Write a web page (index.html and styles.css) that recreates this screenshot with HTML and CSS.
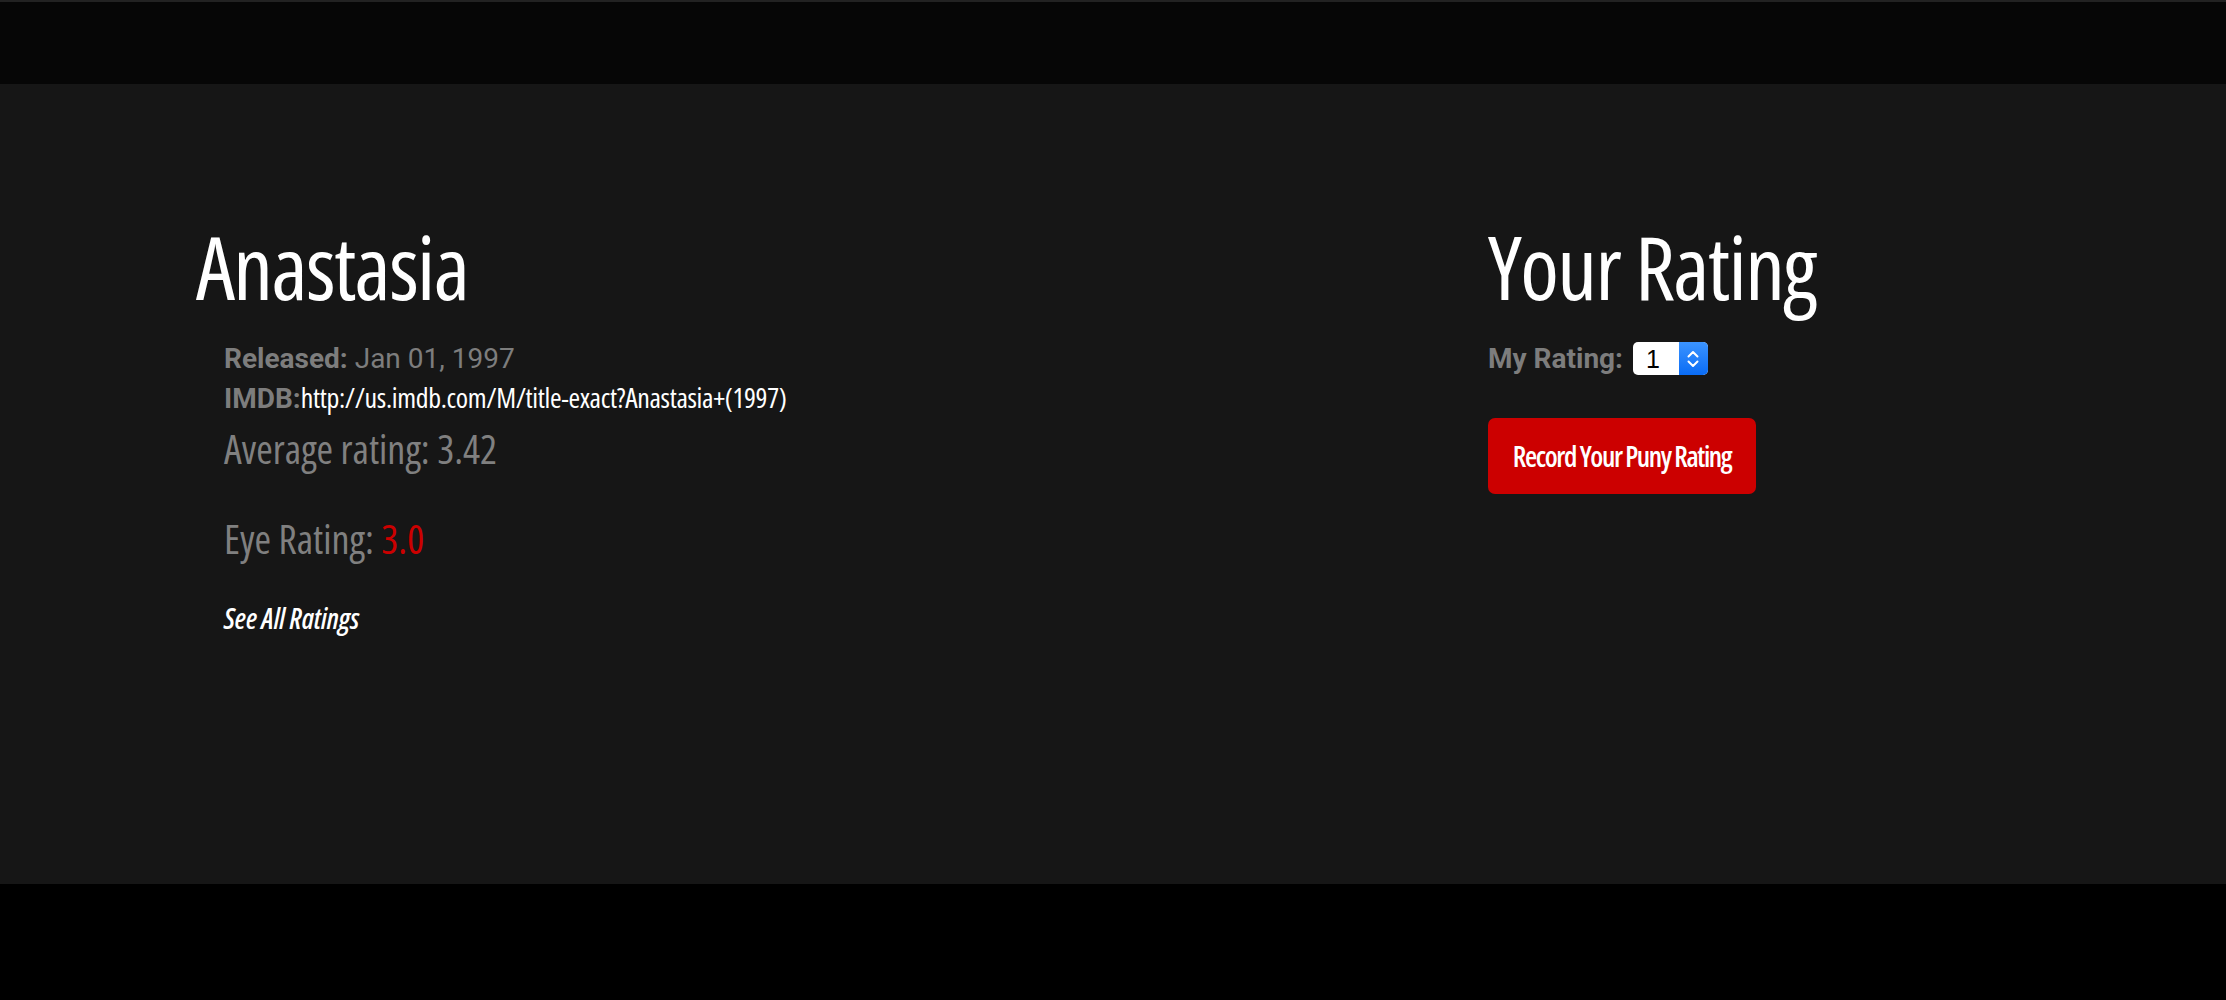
FILE: index.html
```html
<!DOCTYPE html>
<html lang="en">
<head>
<meta charset="utf-8">
<title>Anastasia</title>
<link rel="stylesheet" href="styles.css">
</head>
<body>
<header class="topbar"></header>
<main class="movie">
  <section class="info">
    <h1 class="title">Anastasia</h1>
    <div class="details">
      <div class="meta"><span class="label">Released:</span> Jan 01, 1997</div>
      <div class="meta"><span class="label">IMDB:</span><a class="imdb" href="#">http://us.imdb.com/M/title-exact?Anastasia+(1997)</a></div>
      <p class="avg">Average rating: 3.42</p>
      <p class="eye">Eye Rating: <span class="eye-val">3.0</span></p>
      <a class="all" href="#">See All Ratings</a>
    </div>
  </section>
  <section class="yours">
    <h1 class="title">Your Rating</h1>
    <div class="my-row">
      <span class="label">My Rating:</span>
      <div class="picker">
        <select class="picker-select">
          <option>1</option><option>2</option><option>3</option><option>4</option><option>5</option>
        </select>
        <span class="picker-arrows"><svg width="14" height="22" viewBox="0 0 14 22"><path d="M2.5 8.5 L7 4 L11.5 8.5" fill="none" stroke="#fff" stroke-width="2" stroke-linecap="round" stroke-linejoin="round"/><path d="M2.5 13.5 L7 18 L11.5 13.5" fill="none" stroke="#fff" stroke-width="2" stroke-linecap="round" stroke-linejoin="round"/></svg></span>
      </div>
    </div>
    <button class="record">Record Your Puny Rating</button>
  </section>
</main>
</body>
</html>
```
FILE: styles.css
```css
html, body {
  margin: 0;
  padding: 0;
}
body {
  background: #000;
  font-family: "Open Sans", "Roboto Condensed", sans-serif;
  font-stretch: 75%;
  color: #fff;
}
.topbar {
  height: 82px;
  background: #060606;
  border-top: 2px solid #222;
}
.movie {
  background: #161616;
  height: 800px;
  box-sizing: border-box;
  padding: 138px 196px 0;
  display: grid;
  grid-template-columns: 1292px 1fr;
}
.title {
  margin: 0;
  font-weight: normal;
  font-size: 88px;
  line-height: 88px;
  letter-spacing: -1.6px;
  color: #fff;
}
.details {
  padding-left: 28px;
  margin-top: 29px;
}
.meta {
  font-family: Roboto, "Liberation Sans", sans-serif;
  font-stretch: normal;
  font-size: 28px;
  line-height: 39px;
  height: 39px;
  color: #7d7d7d;
}
.label {
  font-family: Roboto, "Liberation Sans", sans-serif;
  font-stretch: normal;
  font-weight: bold;
  font-size: 28px;
  color: #7d7d7d;
}
.imdb {
  font-family: "Open Sans", "Roboto Condensed", sans-serif;
  font-stretch: 75%;
  font-size: 28px;
  letter-spacing: -0.35px;
  color: #fff;
  text-decoration: none;
}
.avg, .eye {
  margin: 0;
  font-size: 40px;
  line-height: 47px;
  letter-spacing: 0;
  color: #808080;
}
.avg {
  margin-top: 8px;
}
.eye {
  margin-top: 43px;
}
.eye-val {
  color: #cc0000;
}
.all {
  display: block;
  margin-top: 40px;
  font-size: 28px;
  line-height: 32px;
  font-style: italic;
  font-weight: 600;
  letter-spacing: -0.1px;
  color: #fff;
  text-decoration: none;
}
.my-row {
  margin-top: 29px;
  height: 39px;
  display: flex;
  align-items: center;
  gap: 10px;
}
.picker {
  position: relative;
  width: 75px;
  height: 33px;
}
.picker-select {
  appearance: none;
  -webkit-appearance: none;
  width: 75px;
  height: 33px;
  border: none;
  border-radius: 5px;
  background: #fff;
  color: #000;
  font-family: "Liberation Sans", Arial, sans-serif;
  font-size: 25px;
  padding: 0 0 0 13px;
  margin: 0;
  outline: none;
}
.picker-arrows {
  position: absolute;
  right: 0;
  top: 0;
  width: 29px;
  height: 33px;
  border-radius: 0 5px 5px 0;
  background: linear-gradient(#3b94ff, #0a6cf5);
  display: flex;
  align-items: center;
  justify-content: center;
  pointer-events: none;
}
.record {
  display: block;
  margin-top: 40px;
  width: 268px;
  height: 76px;
  padding: 0;
  border: none;
  border-radius: 7px;
  background: #cc0000;
  color: #fff;
  font-family: "Open Sans", "Roboto Condensed", sans-serif;
  font-stretch: 75%;
  font-weight: 600;
  font-size: 28px;
  letter-spacing: -1.4px;
  cursor: pointer;
}
```
